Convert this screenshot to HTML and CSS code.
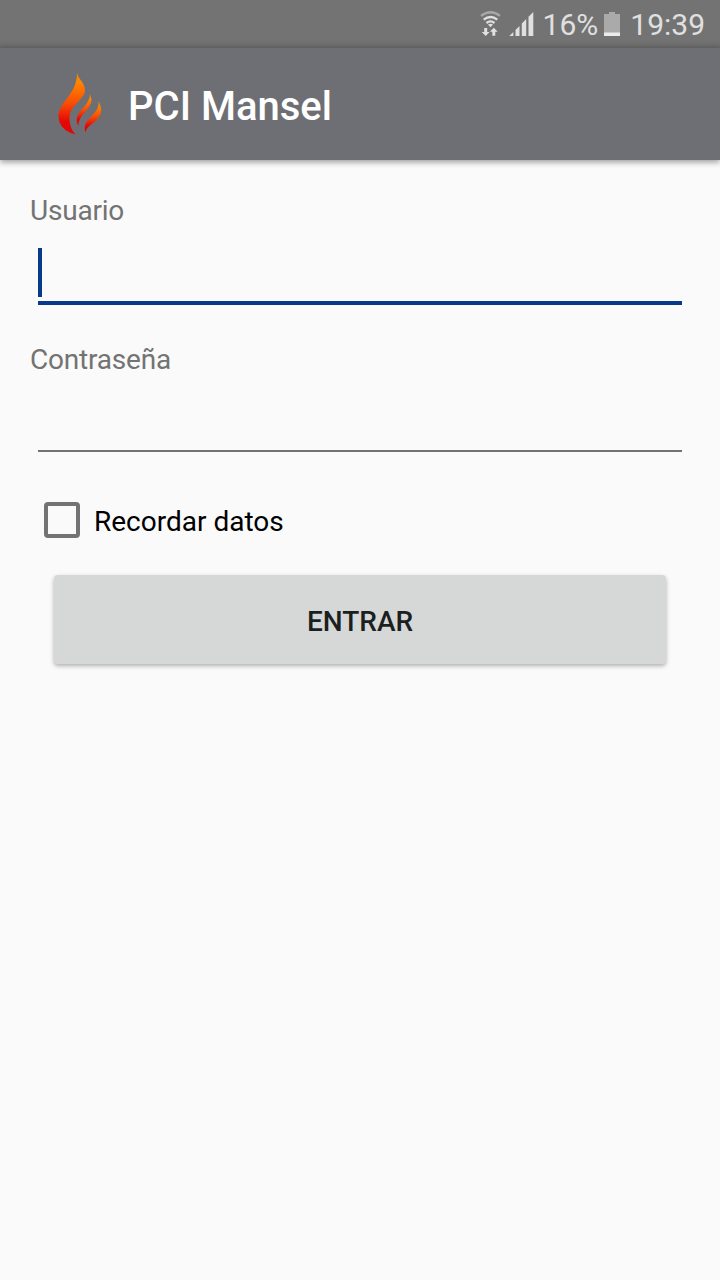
FILE: index.html
```
<!DOCTYPE html>
<html lang="es">

<head>
    <meta charset="UTF-8" />
    <title>PCI Mansel</title>
    <link rel="stylesheet" href="styles.css">
</head>

<body>
    <div class="status-bar">
        <svg class="wifi" width="22" height="26" viewBox="0 0 22 26">
            <g fill="none" stroke="#e0e0e0" stroke-width="2.3">
                <path d="M1 4.8Q10.500 -2.300 20 4.800" stroke="#a8a8a8" />
                <path d="M3.700 8.700Q10.500 3.200 17.300 8.700" />
                <path d="M6.500 12Q10.500 8.700 14.500 12" />
            </g>
            <path d="M8 13.500Q10.500 12.100 13 13.500L10.500 16.300Z" fill="#e0e0e0" />
            <path d="M4.200 17h3v4h2.400l-3.900 4-3.900-4h2.400zM12.300 24.700h3v-4h2.400l-3.900-4-3.900 4h2.400z" fill="#e0e0e0" />
        </svg>
        <svg class="signal" width="26" height="26" viewBox="0 0 26 26">
            <path d="M.3 25L4.300 21V25zM6.500 25v-6l4-4V25zM12.800 25V12.500l4.400-4.400V25zM19.500 25V5.800L24.300 1V25z" fill="#e0e0e0" />
        </svg>
        <span class="percent">16%</span>
        <svg class="battery" width="16" height="24" viewBox="0 0 16 24">
            <path d="M0 2h5V0h6v2h5v22H0z" fill="#aaa" />
            <path d="M0 20.500h16V24H0z" fill="#ebebeb" />
        </svg>
        <span class="clock">19:39</span>
    </div>

    <header class="app-bar">
        <svg class="logo" width="80" height="90" viewBox="0 0 80 90">
            <defs>
                <linearGradient id="flame" x1="0" y1="0" x2="0" y2="1">
                    <stop offset="0.150" stop-color="#ff8500" />
                    <stop offset="0.500" stop-color="#f94c04" />
                    <stop offset="0.800" stop-color="#e40505" />
                </linearGradient>
            </defs>
            <g fill="url(#flame)">
                <path d="M37 13C39 20 45 23 45 30.500C45 39 30 45 29.500 57C29.300 65 31.500 70 35.500 74.500C25 72 18.500 65 18.500 56C18.500 42 37 35 37 13Z" />
                <path d="M50 34C51 38 52.300 39.500 51 43C48.500 51 38.500 55 38.300 66C36.500 62.500 36 59 38 55C41.500 48 50 43 50 34Z" />
                <path d="M58.500 41C60 45 62.500 49 60.500 54C57.500 62 46.500 65 45.500 72.500C43.800 67 45 63.500 49 59C54 53.500 59.500 49 58.500 41Z" />
            </g>
        </svg>
        <h1>PCI Mansel</h1>
    </header>

    <form class="login">
        <label for="usuario">Usuario</label>
        <div class="field focused">
            <span class="caret"></span>
            <input type="text" id="usuario" name="usuario" />
        </div>

        <label for="password">Contraseña</label>
        <div class="field">
            <input type="password" id="password" name="password" />
        </div>

        <label class="remember">
            <input type="checkbox" name="recordar" />
            <span>Recordar datos</span>
        </label>

        <button type="submit">ENTRAR</button>
    </form>
</body>

</html>
```
FILE: styles.css
```
* {
    box-sizing: border-box;
}

body {
    margin: 0;
    min-height: 100vh;
    background: #fafafa;
    font-family: Roboto, sans-serif;
    font-size: 28px;
    line-height: 33px;
}

.status-bar {
    display: flex;
    align-items: center;
    justify-content: flex-end;
    height: 48px;
    padding-right: 15px;
    background: linear-gradient(#737373 40px, #696969);
    color: #e0e0e0;
    font-size: 30px;
}

.signal {
    margin-left: 7px;
}

.percent {
    margin-left: 8px;
}

.battery {
    margin-left: 6px;
}

.clock {
    margin-left: 10px;
}

.app-bar {
    display: flex;
    align-items: center;
    height: 112px;
    padding: 2px 0 0 40px;
    background: #6e6f74;
    box-shadow: 0 2px 6px rgba(0, 0, 0, 0.4);
}

h1 {
    margin: 4px 0 0 8px;
    color: #fff;
    font-size: 40px;
    font-weight: 500;
    line-height: 48px;
}

.login {
    display: flex;
    flex-direction: column;
    padding: 34px 30px;
    color: #737373;
    letter-spacing: -0.2px;
}

.field {
    position: relative;
    height: 76px;
    margin: 0 8px 40px;
    padding-bottom: 2px;
    border-bottom: 2px solid #737373;
}

.field input {
    width: 100%;
    height: 100%;
    padding: 0;
    border: none;
    outline: none;
    background: none;
    font: inherit;
}

.field.focused {
    height: 78px;
    margin-bottom: 38px;
    border-bottom: 4px solid #063b8a;
}

.caret {
    position: absolute;
    left: 0;
    bottom: 4px;
    width: 4px;
    height: 49px;
    background: #063b8a;
}

.remember {
    display: flex;
    align-items: center;
    gap: 14px;
    height: 36px;
    margin: 10px 14px 37px;
    color: #000;
    letter-spacing: 0;
}

.remember span {
    padding-top: 2px;
}

.remember input {
    appearance: none;
    width: 36px;
    height: 36px;
    margin: 0;
    border: 4px solid #737373;
    border-radius: 4px;
}

button {
    height: 89px;
    margin: 0 24px;
    padding: 3px 0 0;
    border: none;
    border-radius: 4px;
    background: #d6d8d7;
    box-shadow: 0 2px 4px rgba(0, 0, 0, 0.3);
    color: #1c1f1f;
    font-family: inherit;
    font-size: 28px;
    font-weight: 500;
}
```
